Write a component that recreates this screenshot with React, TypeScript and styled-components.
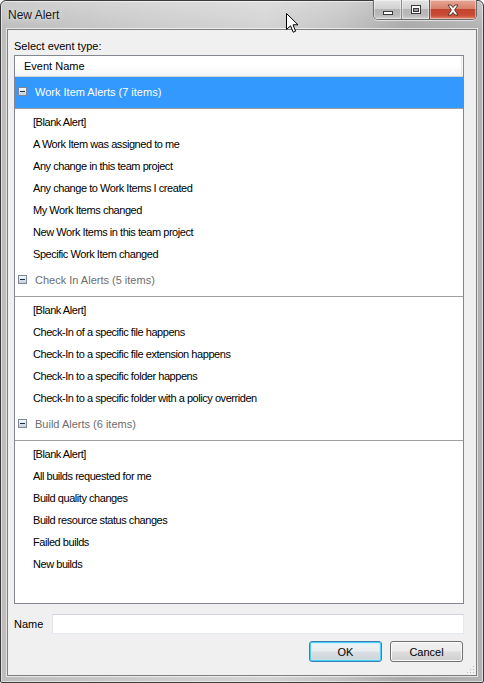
import React from "react";
import styled, { createGlobalStyle } from "styled-components";

const GlobalStyle = createGlobalStyle`
  html, body { margin: 0; padding: 0; }
  body {
    width: 484px;
    height: 683px;
    overflow: hidden;
    background: #ffffff;
    font-family: "Liberation Sans", Arial, sans-serif;
  }
  *, *::before, *::after { box-sizing: border-box; }
`;

const Window = styled.div`
  position: relative;
  width: 484px;
  height: 683px;
  display: flex;
  flex-direction: column;
  padding: 0 6px 6px 6px;
  border: 1px solid #3a3a3a;
  border-radius: 6px 6px 2px 2px;
  background:
    linear-gradient(180deg, rgba(255,255,255,0.25) 0px, rgba(255,255,255,0) 28px),
    linear-gradient(90deg, #bdbdbd 0%, #cbcbcb 30%, #d3d3d3 55%, #c4c4c4 70%, #a9a9a9 84%, #b3b3b3 100%);
  box-shadow: inset 0 0 0 1px rgba(255,255,255,0.55);
`;

const TitleBar = styled.div`
  height: 28px;
  display: flex;
  align-items: flex-start;
`;

const Title = styled.div`
  padding: 7px 0 0 1px;
  font-size: 12px;
  line-height: 15px;
  color: #1a1a1a;
  text-shadow: 0 0 6px rgba(255,255,255,0.9);
`;

const CaptionGroup = styled.div`
  margin-left: auto;
  margin-top: -1px;
  display: flex;
  height: 20px;
  border: 1px solid #6a6a6a;
  border-top: none;
  border-radius: 0 0 5px 5px;
  overflow: hidden;
  box-shadow: 0 1px 0 rgba(255,255,255,0.6);
`;

const CaptionButton = styled.div<{ $w: number; $close?: boolean }>`
  width: ${(p) => p.$w}px;
  height: 100%;
  display: flex;
  align-items: center;
  justify-content: center;
  border-left: ${(p) => (p.$close ? "1px solid #7a4a40" : "1px solid #8a8a8a")};
  &:first-child { border-left: none; }
  background: ${(p) =>
    p.$close
      ? "linear-gradient(180deg, #e8a797 0%, #d8826d 45%, #c2452f 50%, #c94a35 80%, #e0876a 100%)"
      : "linear-gradient(180deg, #e4e4e4 0%, #d2d2d2 45%, #b5b5b5 50%, #b9b9b9 80%, #d2d2d2 100%)"};
  box-shadow: inset 0 0 0 1px rgba(255,255,255,0.45);
`;

const Client = styled.div`
  position: relative;
  flex: 1;
  display: flex;
  flex-direction: column;
  padding: 9px 12px 13px 6px;
  background: #f0f0f0;
  border: 1px solid #7d7d7d;
  box-shadow: 0 0 0 1px rgba(255,255,255,0.65);
  font-size: 11px;
  color: #000;
`;

const Label = styled.div`
  height: 14px;
  line-height: 14px;
  margin-bottom: 2px;
`;

const ListBox = styled.div`
  flex: 1;
  min-height: 0;
  display: flex;
  flex-direction: column;
  background: #ffffff;
  border: 1px solid #828790;
  overflow: hidden;
`;

const ColumnHeader = styled.div`
  position: relative;
  height: 21px;
  flex: none;
  padding-left: 9px;
  line-height: 20px;
  border-bottom: 1px solid #d5d5d5;
  background: linear-gradient(180deg, #ffffff 0%, #ffffff 50%, #f3f4f6 100%);
  &::after {
    content: "";
    position: absolute;
    right: 1px;
    top: 0;
    bottom: 0;
    width: 1px;
    background: #e3e5e7;
  }
`;

const GroupHeader = styled.div<{ $selected?: boolean }>`
  height: 32px;
  flex: none;
  display: flex;
  align-items: center;
  padding-left: 3px;
  padding-bottom: 2px;
  border-bottom: 1px solid #a0a0a0;
  background: ${(p) => (p.$selected ? "#3399ff" : "#ffffff")};
  color: ${(p) => (p.$selected ? "#ffffff" : "#6d6d6d")};
  font-size: 11px;
`;

const Expander = styled.span`
  position: relative;
  width: 9px;
  height: 9px;
  flex: none;
  margin-right: 8px;
  border: 1px solid #7b8899;
  background: linear-gradient(180deg, #f8f9fb 0%, #dfe4ea 55%, #c7ced8 100%);
  &::after {
    content: "";
    position: absolute;
    left: 1px;
    top: 3px;
    width: 5px;
    height: 1px;
    background: #1f2d44;
  }
`;

const Items = styled.div`
  flex: none;
  padding-top: 2px;
`;

const Item = styled.div`
  height: 22px;
  line-height: 22px;
  padding-left: 18px;
  letter-spacing: -0.45px;
  white-space: nowrap;
  color: #000;
`;

const NameRow = styled.div`
  margin-top: 10px;
  display: grid;
  grid-template-columns: 38px 1fr;
  align-items: center;
  height: 20px;
`;

const TextBox = styled.div`
  height: 20px;
  background: #ffffff;
  border: 1px solid #e3e9ef;
  border-top-color: #d0d4da;
  border-left-color: #e2e3ea;
`;

const ButtonRow = styled.div`
  margin-top: 7px;
  display: flex;
  justify-content: flex-end;
  gap: 8px;
  padding-right: 1px;
`;

const Button = styled.div<{ $default?: boolean }>`
  width: 73px;
  height: 21px;
  display: flex;
  align-items: center;
  justify-content: center;
  border-radius: 3px;
  font-size: 11px;
  color: #000;
  border: 1px solid ${(p) => (p.$default ? "#3c7fb1" : "#707070")};
  background: ${(p) =>
    p.$default
      ? "linear-gradient(180deg, #f1f4f6 0%, #e9edf0 48%, #d9dfe3 52%, #ccd3d8 100%)"
      : "linear-gradient(180deg, #f2f2f2 0%, #ebebeb 48%, #dddddd 52%, #cfcfcf 100%)"};
  box-shadow: ${(p) =>
    p.$default
      ? "inset 0 0 0 1px #48d0f5, inset 0 0 0 2px rgba(190,235,250,0.6)"
      : "inset 0 0 0 1px #fbfbfb"};
`;

const Grip = styled.svg`
  position: absolute;
  right: 1px;
  bottom: 1px;
`;

const Cursor = styled.svg`
  position: absolute;
  left: 285px;
  top: 12px;
`;

type Group = { title: string; selected?: boolean; items: string[] };

const groups: Group[] = [
  {
    title: "Work Item Alerts (7 items)",
    selected: true,
    items: [
      "[Blank Alert]",
      "A Work Item was assigned to me",
      "Any change in this team project",
      "Any change to Work Items I created",
      "My Work Items changed",
      "New Work Items in this team project",
      "Specific Work Item changed",
    ],
  },
  {
    title: "Check In Alerts (5 items)",
    items: [
      "[Blank Alert]",
      "Check-In of a specific file happens",
      "Check-In to a specific file extension happens",
      "Check-In to a specific folder happens",
      "Check-In to a specific folder with a policy overriden",
    ],
  },
  {
    title: "Build Alerts (6 items)",
    items: [
      "[Blank Alert]",
      "All builds requested for me",
      "Build quality changes",
      "Build resource status changes",
      "Failed builds",
      "New builds",
    ],
  },
];

export default function App() {
  return (
    <>
      <GlobalStyle />
      <Window>
        <TitleBar>
          <Title>New Alert</Title>
          <CaptionGroup>
            <CaptionButton $w={27}>
              <svg width="12" height="12" viewBox="0 0 12 12">
                <rect x="1.5" y="7.5" width="9" height="3" fill="#ffffff" stroke="#3a3a3a" />
              </svg>
            </CaptionButton>
            <CaptionButton $w={28}>
              <svg width="12" height="12" viewBox="0 0 12 12">
                <rect x="1.5" y="1.5" width="9" height="8" fill="#ffffff" stroke="#3a3a3a" />
                <rect x="3.5" y="4.5" width="5" height="3" fill="#9a9a9a" stroke="#3a3a3a" />
              </svg>
            </CaptionButton>
            <CaptionButton $w={47} $close>
              <svg width="14" height="12" viewBox="0 0 14 12">
                <path
                  d="M2 1 L5 1 L7 3.6 L9 1 L12 1 L8.6 6 L12 11 L9 11 L7 8.4 L5 11 L2 11 L5.4 6 Z"
                  fill="#ffffff"
                  stroke="#4a2a24"
                  strokeWidth="0.9"
                />
              </svg>
            </CaptionButton>
          </CaptionGroup>
        </TitleBar>
        <Client>
          <Label>Select event type:</Label>
          <ListBox>
            <ColumnHeader>Event Name</ColumnHeader>
            {groups.map((g) => (
              <React.Fragment key={g.title}>
                <GroupHeader $selected={g.selected}>
                  <Expander />
                  {g.title}
                </GroupHeader>
                <Items>
                  {g.items.map((it, i) => (
                    <Item key={i}>{it}</Item>
                  ))}
                </Items>
              </React.Fragment>
            ))}
          </ListBox>
          <NameRow>
            <span>Name</span>
            <TextBox />
          </NameRow>
          <ButtonRow>
            <Button $default>OK</Button>
            <Button>Cancel</Button>
          </ButtonRow>
          <Grip width="8" height="8" viewBox="0 0 8 8">
            <rect x="6" y="0" width="1" height="1" fill="#b8b8b8" />
            <rect x="3" y="3" width="1" height="1" fill="#b8b8b8" />
            <rect x="6" y="3" width="1" height="1" fill="#b8b8b8" />
            <rect x="0" y="6" width="1" height="1" fill="#b8b8b8" />
            <rect x="3" y="6" width="1" height="1" fill="#b8b8b8" />
            <rect x="6" y="6" width="1" height="1" fill="#b8b8b8" />
          </Grip>
        </Client>
        <Cursor width="13" height="21" viewBox="0 0 13 21">
          <path
            d="M0.5 0.5 L0.5 16.5 L4.5 12.8 L7.2 19.2 L9.6 18.2 L7 11.8 L12 11.8 Z"
            fill="#ffffff"
            stroke="#000000"
            strokeWidth="1"
            strokeLinejoin="miter"
          />
        </Cursor>
      </Window>
    </>
  );
}
